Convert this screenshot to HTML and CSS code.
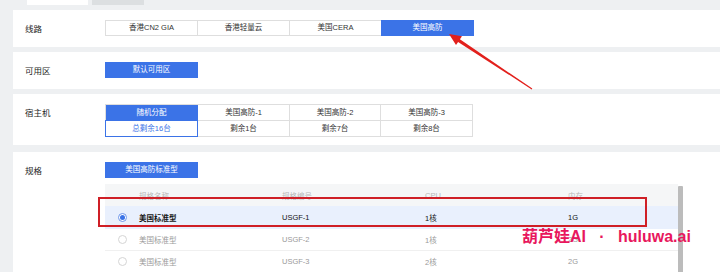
FILE: index.html
```html
<!DOCTYPE html>
<html lang="zh-CN">
<head>
<meta charset="utf-8">
<title>配置</title>
<link rel="stylesheet" href="styles.css">
</head>
<body>
<div class="tabs">
  <div class="tab tab-active"></div>
  <div class="tab tab-gray"></div>
</div>

<section class="card">
  <div class="label">线路</div>
  <div class="seg">
    <div class="opt">香港CN2 GIA</div>
    <div class="opt">香港轻量云</div>
    <div class="opt">美国CERA</div>
    <div class="opt opt-on">美国高防</div>
  </div>
</section>

<section class="card">
  <div class="label">可用区</div>
  <div class="seg">
    <div class="opt opt-on">默认可用区</div>
  </div>
</section>

<section class="card card-host">
  <div class="label">宿主机</div>
  <div class="host">
    <div class="hcell hcell-on">随机分配</div>
    <div class="hcell">美国高防-1</div>
    <div class="hcell">美国高防-2</div>
    <div class="hcell">美国高防-3</div>
    <div class="hcell hcell-sub">总剩余16台</div>
    <div class="hcell">剩余1台</div>
    <div class="hcell">剩余7台</div>
    <div class="hcell">剩余8台</div>
  </div>
</section>

<section class="card card-spec">
  <div class="label">规格</div>
  <div class="spec">
    <div class="seg">
      <div class="opt opt-on">美国高防标准型</div>
    </div>
    <div class="tablewrap">
      <div class="table">
        <div class="tr th">
          <div></div><div>规格名称</div><div>规格编号</div><div>CPU</div><div>内存</div>
        </div>
        <div class="tr tr-on">
          <div class="rc"><span class="radio radio-on"></span></div><div class="name">美国标准型</div><div>USGF-1</div><div>1核</div><div>1G</div>
        </div>
        <div class="tr">
          <div class="rc"><span class="radio"></span></div><div>美国标准型</div><div>USGF-2</div><div>1核</div><div>2G</div>
        </div>
        <div class="tr">
          <div class="rc"><span class="radio"></span></div><div>美国标准型</div><div>USGF-3</div><div>2核</div><div>2G</div>
        </div>
      </div>
      <div class="scrollbar"></div>
    </div>
  </div>
</section>

<div class="redbox"></div>
<svg class="arrow" width="720" height="272" viewBox="0 0 720 272">
  <polygon points="449,34 462,36.2 459.9,39.3 532.3,88.6 531.7,89.4 458.1,41.9 456,45" fill="#e2201c"/>
</svg>
<div class="watermark">葫芦娃AI&nbsp;&nbsp;&nbsp;·&nbsp;&nbsp;&nbsp;huluwa.ai</div>
</body>
</html>
```

FILE: styles.css
```css
html, body {
  margin: 0;
  padding: 0;
}
body {
  width: 720px;
  height: 272px;
  overflow: hidden;
  position: relative;
  background: #eef0f2;
  font-family: "Liberation Sans", "Noto Sans CJK SC", sans-serif;
  color: #333;
}
.tabs {
  display: flex;
  height: 10px;
  padding-left: 27px;
  gap: 4px;
}
.tab {
  height: 5px;
}
.tab-active {
  width: 61px;
  background: #ffffff;
}
.tab-gray {
  width: 52px;
  background: #dcdfe1;
}
.card {
  display: flex;
  align-items: flex-start;
  margin-left: 13px;
  margin-bottom: 5px;
  padding: 10px 0 11px;
  background: #ffffff;
}
.card-host {
  padding-bottom: 8px;
  margin-bottom: 7px;
}
.card-spec {
  padding-bottom: 40px;
}
.label {
  box-sizing: border-box;
  width: 92px;
  padding-left: 12px;
  font-size: 8.5px;
  line-height: 16px;
  color: #1e1e1e;
  font-family: "Noto Sans CJK SC", sans-serif;
}
.seg {
  display: flex;
}
.opt {
  box-sizing: border-box;
  width: 93px;
  height: 16px;
  line-height: 14px;
  border: 1px solid #dedede;
  margin-left: -1px;
  text-align: center;
  font-size: 7.5px;
  color: #333;
}
.opt:first-child {
  margin-left: 0;
}
.opt-on {
  background: #3b73e7;
  border-color: #3b73e7;
  color: #ffffff;
}
.host {
  display: grid;
  grid-template-columns: 92px 92px 91px 92px;
  grid-template-rows: 16px 16px;
  border-left: 1px solid #dedede;
  border-top: 1px solid #dedede;
}
.hcell {
  box-sizing: border-box;
  border-right: 1px solid #dedede;
  border-bottom: 1px solid #dedede;
  text-align: center;
  font-size: 7.5px;
  line-height: 15px;
  color: #333;
}
.hcell-on {
  background: #3b73e7;
  border-color: #3b73e7;
  color: #ffffff;
}
.hcell-sub {
  border: 1px solid #3b73e7;
  margin-left: -1px;
  margin-top: -1px;
  line-height: 15px;
  color: #3b73e7;
}
.spec {
  display: flex;
  flex-direction: column;
  gap: 6px;
}
.tablewrap {
  display: flex;
  align-items: flex-start;
}
.table {
  width: 573px;
}
.tr {
  display: grid;
  grid-template-columns: 34px 143px 143px 143px 110px;
  height: 22px;
  align-items: center;
  font-size: 7.5px;
  color: #9a9a9a;
  border-bottom: 1px solid #f0f0f0;
  box-sizing: border-box;
}
.th {
  background: #f5f6f7;
  color: #b8b8b8;
  border-bottom: none;
}
.tr-on {
  background: #e9f0fd;
  color: #141414;
  border-bottom: none;
  height: 23px;
}
.name {
  font-weight: 600;
}
.rc {
  display: flex;
  justify-content: center;
  padding-left: 1px;
}
.radio {
  box-sizing: border-box;
  width: 9px;
  height: 9px;
  border-radius: 50%;
  border: 1px solid #d5d5d5;
  background: #fff;
  display: flex;
  align-items: center;
  justify-content: center;
}
.radio-on {
  border-color: #6c95ea;
}
.radio-on::after {
  content: "";
  width: 5px;
  height: 5px;
  border-radius: 50%;
  background: #3b73e7;
}
.scrollbar {
  width: 5px;
  height: 90px;
  margin-top: 2px;
  background: #bcbcbc;
  border-radius: 1px;
}
.redbox {
  position: absolute;
  left: 98px;
  top: 197px;
  width: 549px;
  height: 30px;
  box-sizing: border-box;
  border: 2px solid #cf1f26;
}
.arrow {
  position: absolute;
  left: 0;
  top: 0;
  pointer-events: none;
}
.watermark {
  position: absolute;
  left: 522px;
  top: 228px;
  font-size: 16px;
  line-height: 18px;
  font-weight: bold;
  color: #e8175d;
  font-family: "Liberation Sans", "Noto Sans CJK SC", sans-serif;
  white-space: nowrap;
}
```
